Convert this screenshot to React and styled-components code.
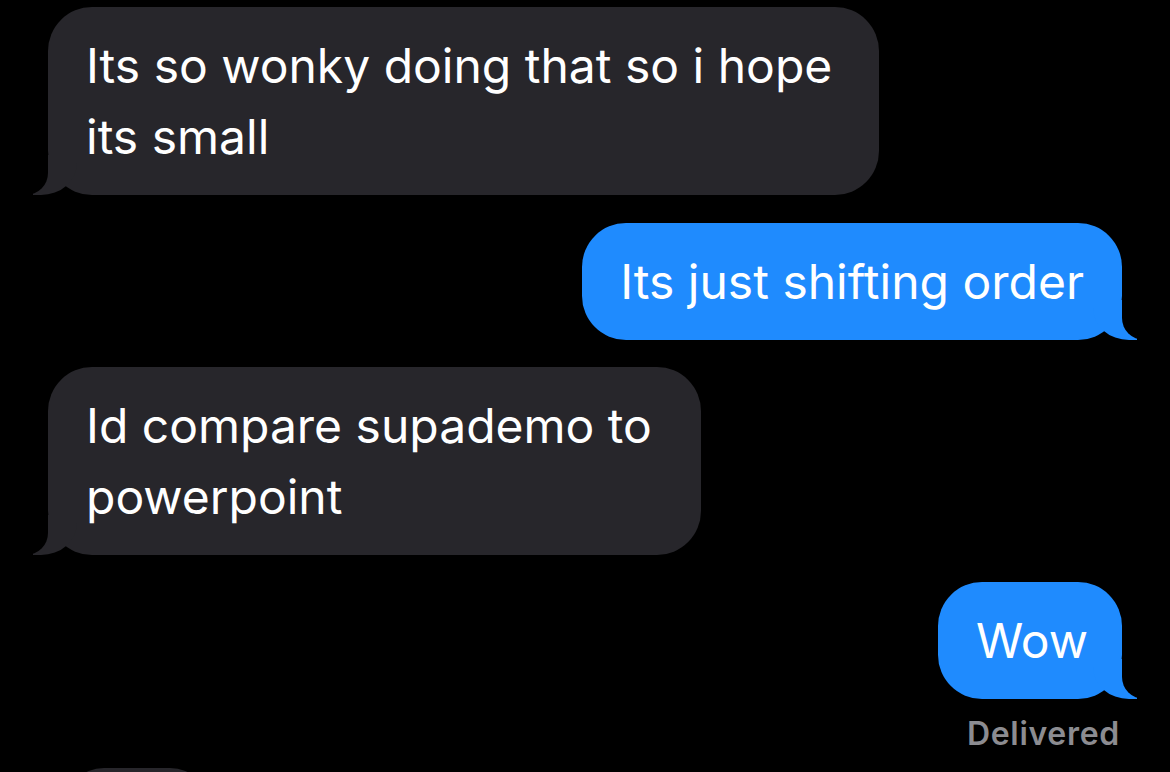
import React from 'react';
import styled, { createGlobalStyle, css } from 'styled-components';

const GlobalStyle = createGlobalStyle`
    html, body {
        margin: 0;
        padding: 0;
        background: #000;
    }
    body {
        font-family: Inter, "Noto Sans", "Liberation Sans", sans-serif;
        -webkit-font-smoothing: antialiased;
    }
`

const Thread = styled.div`
    width: 1170px;
    height: 772px;
    overflow: hidden;
    background: #000;
    display: flex;
    flex-direction: column;
    padding: 7px 48px 0;
    box-sizing: border-box;
`

const Row = styled.div`
    display: flex;
    justify-content: ${({ $me }) => $me ? 'flex-end' : 'flex-start'};
    margin-top: ${({ $gap }) => $gap ?? 28}px;
    &:first-child {
        margin-top: 0;
    }
`

const Bubble = styled.div`
    position: relative;
    width: ${({ $width }) => $width || 'auto'};
    padding: 23px 38px;
    border-radius: 44px;
    font-size: 48px;
    line-height: 71px;
    color: #fff;
    background: ${({ $me }) => $me ? '#1f8bfe' : '#27262b'};
    box-sizing: border-box;

    &::before, &::after {
        content: "";
        position: absolute;
        bottom: 0;
        height: 40px;
    }

    ${({ $me }) => $me ? css`
        &::before {
            right: -15px;
            width: 44px;
            background: #1f8bfe;
            border-bottom-left-radius: 36px 32px;
        }
        &::after {
            right: -56px;
            width: 56px;
            background: #000;
            border-bottom-left-radius: 22px;
        }
    ` : css`
        &::before {
            left: -15px;
            width: 44px;
            background: #27262b;
            border-bottom-right-radius: 36px 32px;
        }
        &::after {
            left: -56px;
            width: 56px;
            background: #000;
            border-bottom-right-radius: 22px;
        }
    `}
`

const Status = styled.div`
    align-self: flex-end;
    margin: 15px 2px 0 0;
    font-size: 32px;
    line-height: 40px;
    font-weight: 600;
    letter-spacing: 0.7px;
    color: #8c8c91;
`

const PeekBubble = styled.div`
    margin: 14px 0 0 16px;
    width: 146px;
    height: 80px;
    flex-shrink: 0;
    border-radius: 40px;
    background: #27262b;
`

export default function App() {
    return (
        <>
            <GlobalStyle />
            <Thread>
                <Row>
                    <Bubble $width='831px'>Its so wonky doing that so i hope its small</Bubble>
                </Row>
                <Row $me>
                    <Bubble $me>Its just shifting order</Bubble>
                </Row>
                <Row $gap={27}>
                    <Bubble $width='653px'>Id compare supademo to powerpoint</Bubble>
                </Row>
                <Row $me $gap={27}>
                    <Bubble $me $width='184px'>Wow</Bubble>
                </Row>
                <Status>Delivered</Status>
                <PeekBubble />
            </Thread>
        </>
    )
}
